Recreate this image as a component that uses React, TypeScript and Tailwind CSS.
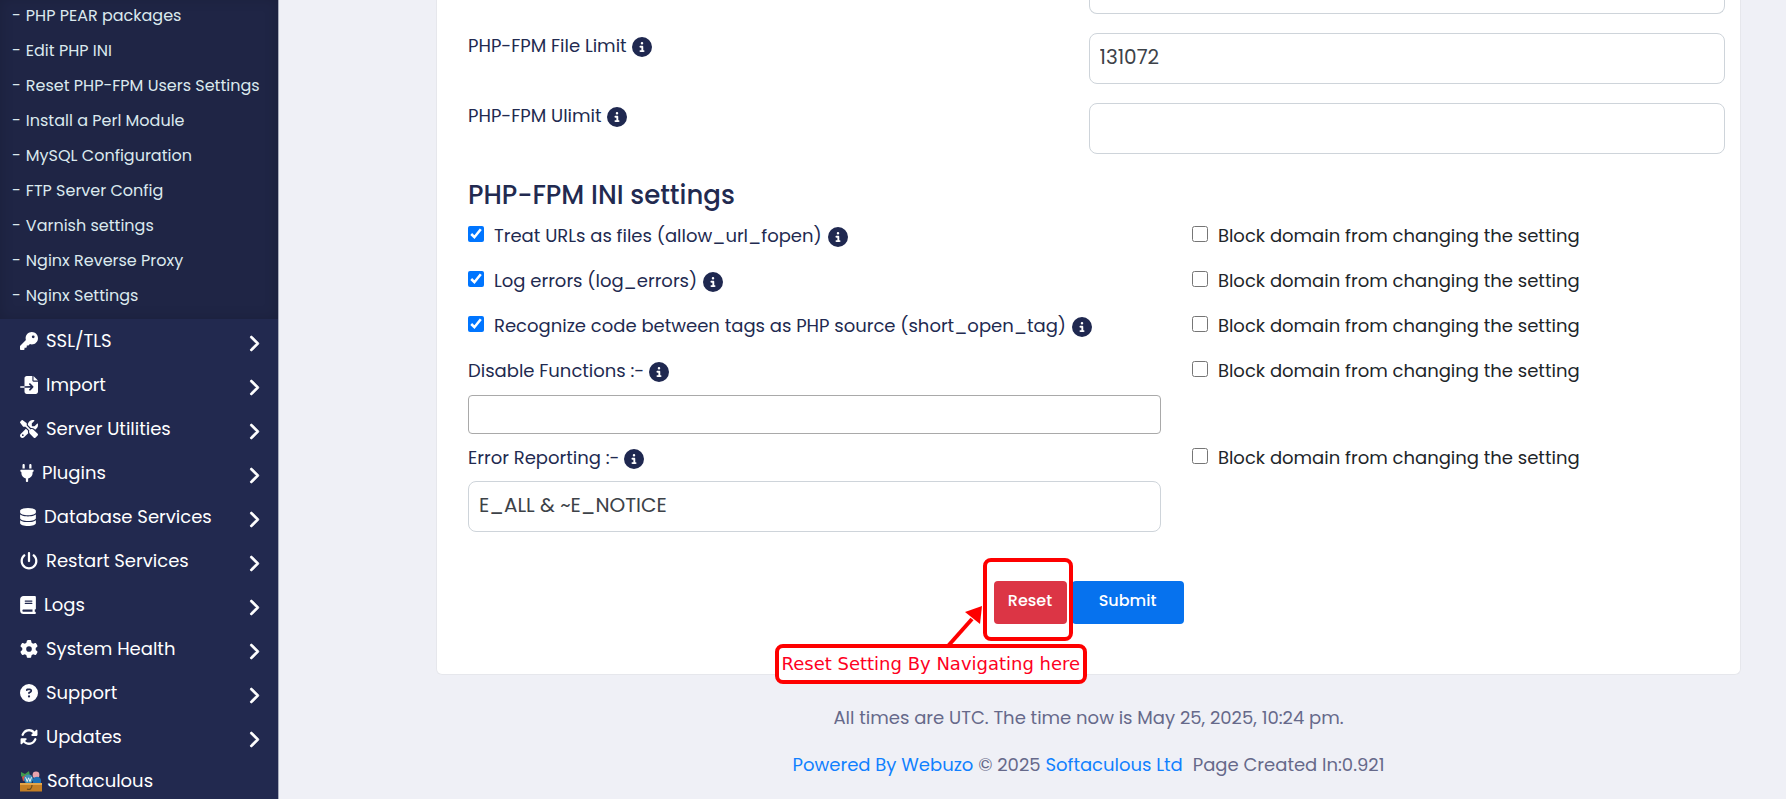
import { useState } from "react";
import type { ReactNode } from "react";
import type { IconType } from "react-icons";
import {
  FaKey,
  FaFileImport,
  FaScrewdriverWrench,
  FaPlug,
  FaDatabase,
  FaPowerOff,
  FaBook,
  FaGear,
  FaCircleQuestion,
  FaRotate,
  FaCircleInfo,
  FaChevronRight,
} from "react-icons/fa6";

const subItems = [
  "PHP PEAR packages",
  "Edit PHP INI",
  "Reset PHP-FPM Users Settings",
  "Install a Perl Module",
  "MySQL Configuration",
  "FTP Server Config",
  "Varnish settings",
  "Nginx Reverse Proxy",
  "Nginx Settings",
];

const menuItems: { label: string; icon: IconType; width: string }[] = [
  { label: "SSL/TLS", icon: FaKey, width: "w-[18px]" },
  { label: "Import", icon: FaFileImport, width: "w-[18px]" },
  { label: "Server Utilities", icon: FaScrewdriverWrench, width: "w-[18px]" },
  { label: "Plugins", icon: FaPlug, width: "w-[14px]" },
  { label: "Database Services", icon: FaDatabase, width: "w-4" },
  { label: "Restart Services", icon: FaPowerOff, width: "w-[18px]" },
  { label: "Logs", icon: FaBook, width: "w-4" },
  { label: "System Health", icon: FaGear, width: "w-[18px]" },
  { label: "Support", icon: FaCircleQuestion, width: "w-[18px]" },
  { label: "Updates", icon: FaRotate, width: "w-[18px]" },
];

function SoftaculousIcon() {
  return (
    <svg viewBox="0 0 22 21" className="h-[21px] w-[22px] shrink-0" aria-hidden="true">
      <path d="M1 1l4 2 4-3 1 5-5 3-4-3z" fill="#3f9b4f" />
      <path d="M2 6l4-2 2 4-5 2z" fill="#d9534a" />
      <circle cx="16" cy="4" r="3.4" fill="#e8a3ad" />
      <path d="M13 8c2-3 7-3 8 1v3h-8z" fill="#1d6fb4" />
      <circle cx="8.5" cy="8" r="4.6" fill="#3d8fb8" />
      <path d="M5.6 6.2l1.6 4.4 1.4-3.8 1.4 3.8 1.5-4.4" fill="none" stroke="#e6f2f8" strokeWidth="1" />
      <path d="M0 12h22v8.500H0z" fill="#c47f25" />
      <path d="M0 12h22v2H0z" fill="#e5a548" />
      <path d="M7 18c3 1.500 5-1 5-4" fill="none" stroke="#6b4a1c" strokeWidth="1.200" />
    </svg>
  );
}

function Sidebar() {
  return (
    <nav className="w-[279px] shrink-0 overflow-hidden border-r border-[#a9adbd] bg-[#22294f] text-white">
      <ul className="-mt-0.5 bg-[#1f2545] pb-1.5 text-base text-[#dbe9ee] shadow-[inset_0_0_14px_rgba(0,0,0,0.15)]">
        {subItems.map((item) => (
          <li key={item}>
            <a href="#" className="flex h-[35px] items-center gap-[5px] pl-3 whitespace-nowrap">
              <span>-</span>
              {item}
            </a>
          </li>
        ))}
      </ul>
      <ul className="text-lg">
        {menuItems.map(({ label, icon: Icon, width }) => (
          <li key={label}>
            <a href="#" className="flex h-11 items-center gap-2 pr-4 pl-5">
              <Icon className={"h-[18px] shrink-0 " + width} />
              <span className="grow">{label}</span>
              <FaChevronRight className="mt-1 size-[17px] stroke-current stroke-[24px]" />
            </a>
          </li>
        ))}
        <li>
          <a href="#" className="flex h-11 items-center gap-[5px] pl-5">
            <SoftaculousIcon />
            Softaculous
          </a>
        </li>
      </ul>
    </nav>
  );
}

function Info() {
  return <FaCircleInfo className="mt-0.5 size-5 shrink-0 text-[#1f2850]" />;
}

const inputClass = "block w-full border-[#ced4da] bg-white px-2.5 pb-1 text-xl text-[#3d4248] outline-none";

function LimitRow({ id, label, value }: { id: string; label: string; value: string }) {
  return (
    <div className="grid h-[70px] grid-cols-2">
      <label htmlFor={id} className="flex h-[26px] items-center gap-[5px] pl-4">
        {label} <Info />
      </label>
      <input id={id} type="text" defaultValue={value} className={inputClass + " h-[51px] rounded-lg border"} />
    </div>
  );
}

function Check({ id, label, on = false, info = false }: { id: string; label: string; on?: boolean; info?: boolean }) {
  const [checked, setChecked] = useState(on);
  return (
    <div className="flex h-7 items-center gap-2.5">
      <input
        id={id}
        type="checkbox"
        checked={checked}
        onChange={(e) => setChecked(e.target.checked)}
        className="mb-1 size-4 shrink-0 accent-[#0075ff]"
      />
      <label htmlFor={id} className="flex items-center gap-1.5">
        {label}
        {info && <Info />}
      </label>
    </div>
  );
}

function SettingRow({ id, children }: { id: string; children: ReactNode }) {
  return (
    <div className="grid grid-cols-12 pr-8">
      <div className="col-span-7 pr-[15px] pl-4">{children}</div>
      <div className="col-span-5 pl-4 text-[#212529]">
        <Check id={id + "-block"} label="Block domain from changing the setting" />
      </div>
    </div>
  );
}

function Callout() {
  return (
    <div className="pointer-events-none absolute -top-[23px] -left-[11px] h-[83px] w-[90px] rounded-lg border-4 border-[#fe0000]">
      <svg viewBox="0 0 40 42" className="absolute top-[44px] -left-[42px] h-[42px] w-[40px]" aria-hidden="true">
        <path d="M3 40L27 13" stroke="#fe0000" strokeWidth="4" />
        <path d="M37 0L20 6l15 12z" fill="#fe0000" />
      </svg>
      <div className="absolute top-[82px] -left-[212px] rounded-lg border-4 border-[#fe0000] bg-white px-[3px] py-1 font-['DejaVu_Sans',sans-serif] text-lg leading-6 font-normal whitespace-nowrap text-[#fe0022]">
        Reset Setting By Navigating here
      </div>
    </div>
  );
}

export default function App() {
  return (
    <div className="flex h-screen overflow-hidden bg-[#eff0f6] font-[Poppins,Inter,sans-serif] text-[#222a50]">
      <Sidebar />
      <main className="grow pr-[45px] pl-[157px] text-lg">
        <form
          onSubmit={(e) => e.preventDefault()}
          className="rounded-b-md border border-t-0 border-[#e6e7ec] bg-white px-[15px] pb-[50px]"
        >
          <div className="grid grid-cols-2">
            <input
              aria-label="PHP-FPM Process Limit"
              type="text"
              className={inputClass + " col-start-2 h-[14px] rounded-b-lg border border-t-0"}
            />
          </div>
          <div className="pt-[19px]">
            <LimitRow id="file-limit" label="PHP-FPM File Limit" value="131072" />
            <LimitRow id="ulimit" label="PHP-FPM Ulimit" value="" />
          </div>
          <h2 className="pt-1 pl-4 text-[26px] leading-9 font-medium">PHP-FPM INI settings</h2>
          <div className="flex flex-col gap-[17px] pt-[9px]">
            <SettingRow id="fopen">
              <Check id="fopen" label="Treat URLs as files (allow_url_fopen)" on info />
            </SettingRow>
            <SettingRow id="log">
              <Check id="log" label="Log errors (log_errors)" on info />
            </SettingRow>
            <SettingRow id="tag">
              <Check id="tag" label="Recognize code between tags as PHP source (short_open_tag)" on info />
            </SettingRow>
            <SettingRow id="disable">
              <label htmlFor="disable" className="flex h-7 items-center gap-[5px]">
                Disable Functions :- <Info />
              </label>
              <input
                id="disable"
                type="text"
                className="mt-2.5 block h-[39px] w-full rounded border border-[#a9a9a9] px-2.5 outline-none"
              />
            </SettingRow>
          </div>
          <div className="pt-2.5">
            <SettingRow id="reporting">
              <label htmlFor="reporting" className="flex h-7 items-center gap-[5px]">
                Error Reporting :- <Info />
              </label>
              <input
                id="reporting"
                type="text"
                defaultValue="E_ALL & ~E_NOTICE"
                className={inputClass + " mt-[9px] h-[51px] rounded-lg border"}
              />
            </SettingRow>
          </div>
          <div className="flex justify-center gap-[5px] pt-[49px] text-base font-medium text-white">
            <div className="relative">
              <button type="button" className="h-[43px] w-[73px] rounded bg-[#dc3545] pb-1">
                Reset
              </button>
              <Callout />
            </div>
            <button type="submit" className="h-[43px] w-[112px] rounded bg-[#0672ee] pb-1">
              Submit
            </button>
          </div>
        </form>
        <footer className="flex flex-col items-center gap-[19px] pt-[29px] leading-7 text-[#66698a]">
          <p>All times are UTC. The time now is May 25, 2025, 10:24 pm.</p>
          <p>
            <a href="#" className="text-[#1080ff]">Powered By Webuzo</a> © 2025{" "}
            <a href="#" className="text-[#1080ff]">Softaculous Ltd</a>
            <span className="pl-2.5">Page Created In:0.921</span>
          </p>
        </footer>
      </main>
    </div>
  );
}
